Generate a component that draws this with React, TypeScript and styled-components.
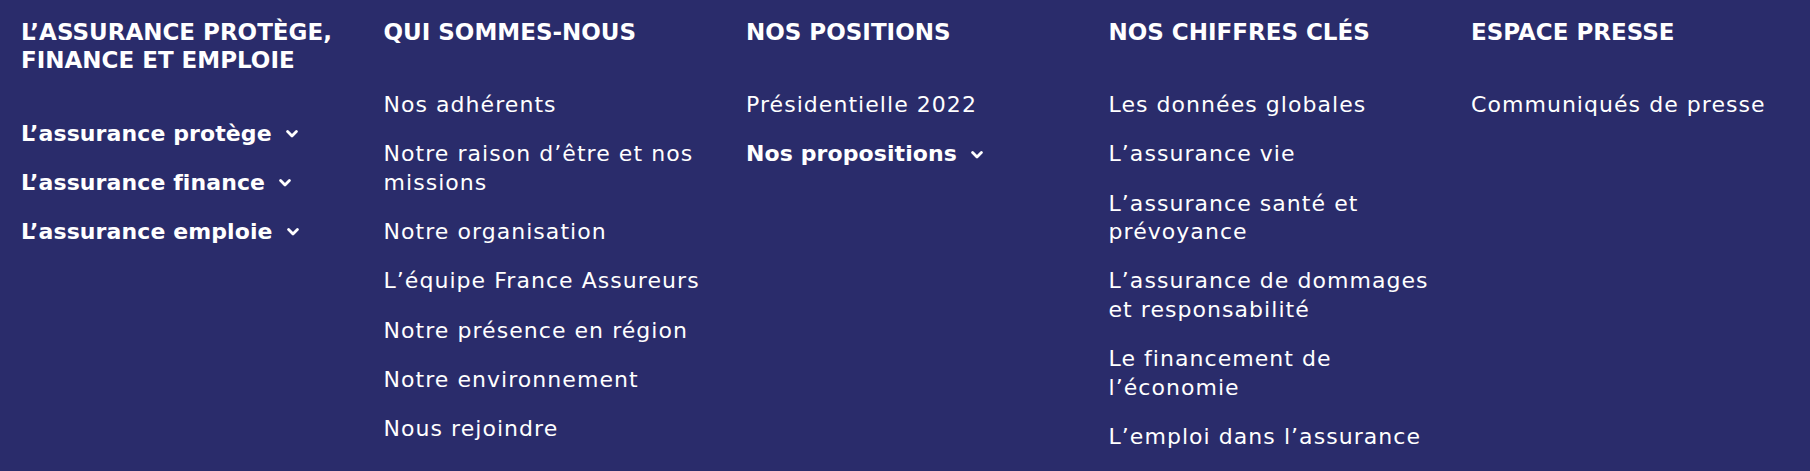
import React from "react";
import styled, { createGlobalStyle } from "styled-components";

const Global = createGlobalStyle`
  html, body { margin: 0; padding: 0; background: #2a2c6b; }
  * { box-sizing: border-box; }
`;

const Footer = styled.nav`
  display: grid;
  grid-template-columns: repeat(5, 330px);
  column-gap: 32.5px;
  padding: 17.5px 0 0 21px;
  height: 471px;
  background: #2a2c6b;
  color: #ffffff;
  font-family: "DejaVu Sans", "Noto Sans", sans-serif;
`;

const Column = styled.div`
  display: flex;
  flex-direction: column;
`;

const Heading = styled.h3`
  margin: 0 0 45px;
  font-size: 23px;
  line-height: 28.5px;
  font-weight: 700;
  text-transform: uppercase;
  letter-spacing: 0;
`;

const List = styled.ul`
  list-style: none;
  margin: 0;
  padding: 0;
  display: flex;
  flex-direction: column;
  gap: 20.8px;
`;

const Item = styled.li<{ $bold?: boolean }>`
  font-size: 22px;
  line-height: 28.5px;
  font-weight: ${(p) => (p.$bold ? 700 : 400)};
  letter-spacing: ${(p) => (p.$bold ? "0.1px" : "1.05px")};
  display: flex;
  align-items: center;
`;

const Chevron = styled.svg`
  width: 12px;
  height: 8px;
  margin-left: 14px;
  flex: none;
`;

const Down = () => (
  <Chevron viewBox="0 0 12 8">
    <polyline points="1.6,1.6 6,6 10.4,1.6" fill="none" stroke="#fff" strokeWidth="2.8" strokeLinecap="round" strokeLinejoin="round" />
  </Chevron>
);

type Entry = { label: string; bold?: boolean };
const columns: { title: string; items: Entry[] }[] = [
  {
    title: "L’assurance protège, finance et emploie",
    items: [
      { label: "L’assurance protège", bold: true },
      { label: "L’assurance finance", bold: true },
      { label: "L’assurance emploie", bold: true },
    ],
  },
  {
    title: "Qui sommes-nous",
    items: [
      { label: "Nos adhérents" },
      { label: "Notre raison d’être et nos missions" },
      { label: "Notre organisation" },
      { label: "L’équipe France Assureurs" },
      { label: "Notre présence en région" },
      { label: "Notre environnement" },
      { label: "Nous rejoindre" },
    ],
  },
  {
    title: "Nos positions",
    items: [{ label: "Présidentielle 2022" }, { label: "Nos propositions", bold: true }],
  },
  {
    title: "Nos chiffres clés",
    items: [
      { label: "Les données globales" },
      { label: "L’assurance vie" },
      { label: "L’assurance santé et prévoyance" },
      { label: "L’assurance de dommages et responsabilité" },
      { label: "Le financement de l’économie" },
      { label: "L’emploi dans l’assurance" },
    ],
  },
  {
    title: "Espace presse",
    items: [{ label: "Communiqués de presse" }],
  },
];

export default function App() {
  return (
    <>
      <Global />
      <Footer>
        {columns.map((c) => (
          <Column key={c.title}>
            <Heading>{c.title}</Heading>
            <List>
              {c.items.map((it) => (
                <Item key={it.label} $bold={it.bold}>
                  <span>{it.label}</span>
                  {it.bold && <Down />}
                </Item>
              ))}
            </List>
          </Column>
        ))}
      </Footer>
    </>
  );
}
